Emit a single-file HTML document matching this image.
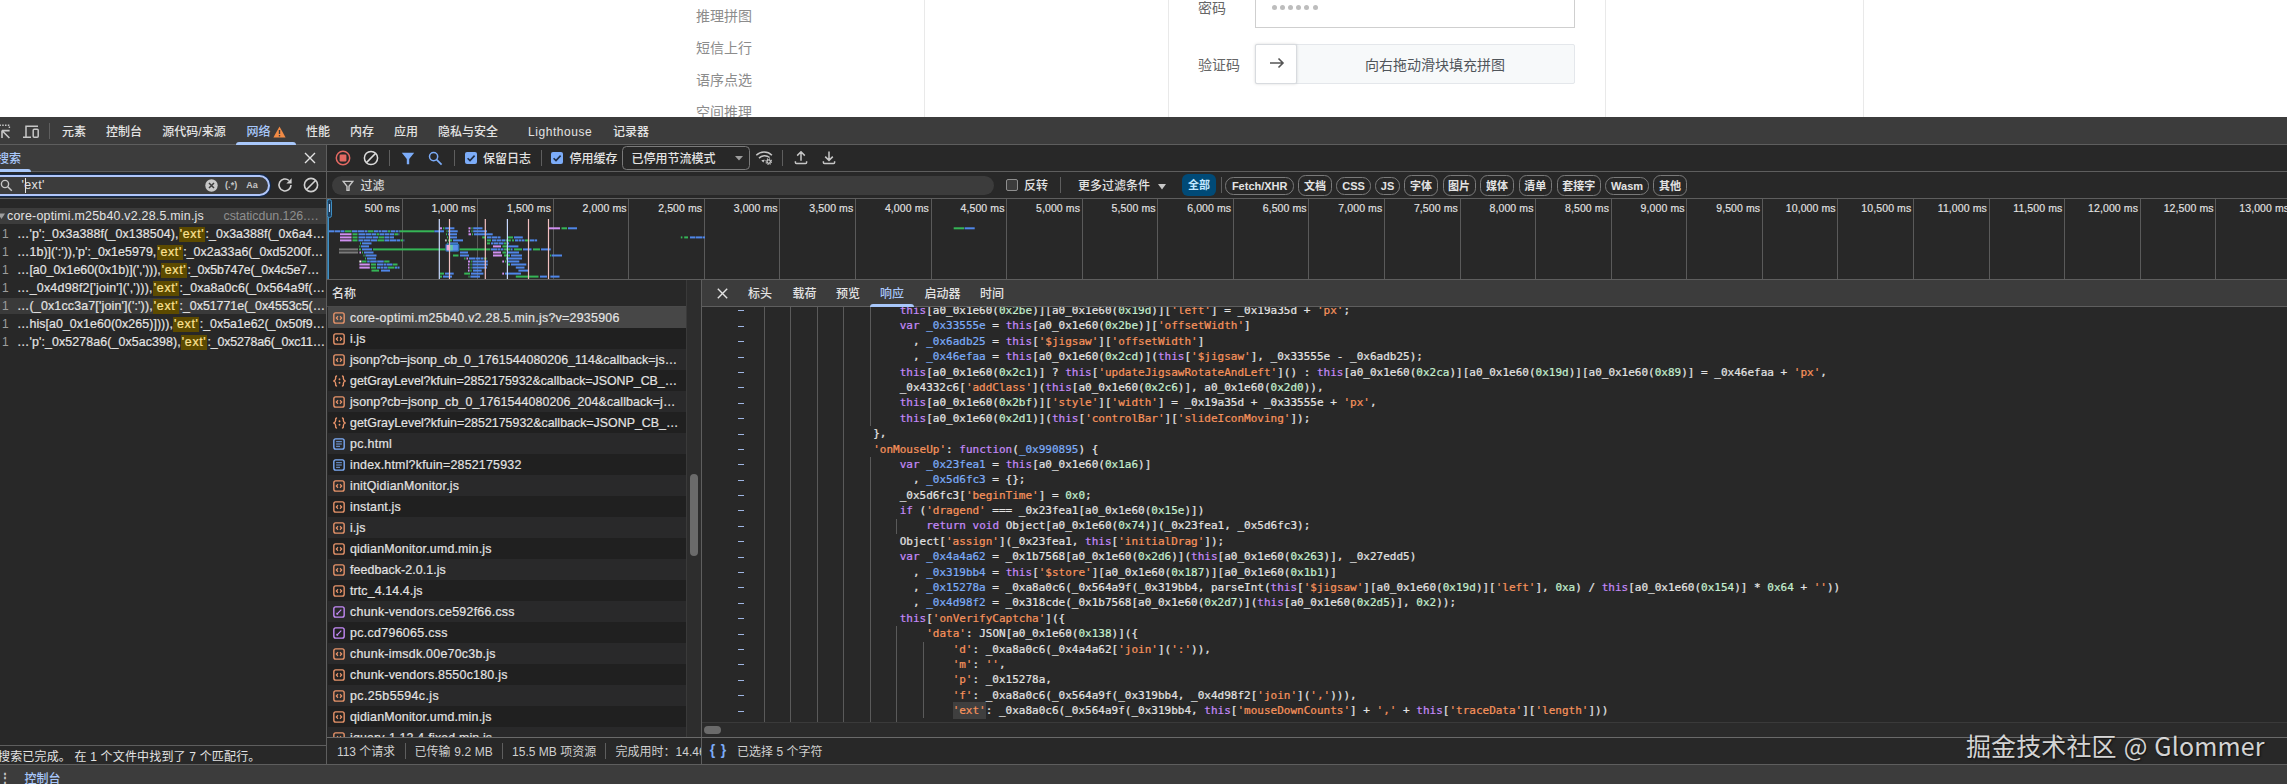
<!DOCTYPE html>
<html lang="zh-CN"><head><meta charset="utf-8"><title>DevTools</title><style>
*{box-sizing:border-box;margin:0;padding:0}
html,body{width:2287px;height:784px;overflow:hidden;background:#fff}
body{position:relative;font-family:"Liberation Sans","Noto Sans CJK SC",sans-serif;font-size:12px;color:#e3e3e3}
.abs{position:absolute}
.t{position:absolute;white-space:nowrap;line-height:16px;height:16px}
.m{font-weight:500}
.ln{position:absolute;background:#5e5e5e}
.pg{position:absolute;color:#8c8c8c;font-size:14px;line-height:20px;white-space:nowrap}
.dt{position:absolute;left:0;top:117px;width:2287px;height:667px;background:#282828}
.pill{position:absolute;border:1px solid #7a7a7a;border-radius:9px;text-align:center;white-space:nowrap;font-weight:bold;font-size:11px;color:#e3e3e3}
.tick{-webkit-text-stroke:.15px;position:absolute;top:201px;letter-spacing:.1px;font-size:10.5px;line-height:14px;text-align:right;white-space:nowrap;color:#e3e3e3;width:80px}
.gl{position:absolute;top:199px;width:1px;height:80px;background:#5a5a5a}
.row{position:absolute;left:328px;width:358px;height:21px}
.row .nm{-webkit-text-stroke:.2px;position:absolute;left:22px;top:3px;line-height:16px;white-space:nowrap;color:#e3e3e3}
.row svg{position:absolute;left:4.6px;top:4.6px}
.sr{position:absolute;left:0;width:326px;height:18px;white-space:nowrap;overflow:hidden}
.sr .n{position:absolute;left:2px;top:1px;color:#9e9e9e;line-height:16px}
.sr .c{-webkit-text-stroke:.2px;position:absolute;top:1px;line-height:16px;white-space:nowrap;color:#e3e3e3;font-size:12.4px}
.hl{background:#5c4a00;color:#fde293;padding:1px 0 1px 0;letter-spacing:1.05px}
.code{position:absolute;left:702px;top:307px;width:1585px;height:416px;overflow:hidden;background:#282828}
.cl{position:absolute;left:65.2px;white-space:pre;font-family:"DejaVu Sans Mono","Liberation Mono",monospace;font-size:11px;line-height:15.35px;height:15.35px;color:#e3e3e3;-webkit-text-stroke:.22px}
.k{color:#c58af9}.s{color:#f8935c}.n{color:#c4eed0}.d{color:#7cacf8}
.dash{position:absolute;left:36px;width:6.4px;height:1.3px;background:#9fb6e4}
.ig{position:absolute;width:1px;background:#5a5a5a}
</style></head><body>
<div class="pg" style="left:696px;top:6px">推理拼图</div>
<div class="pg" style="left:696px;top:38px">短信上行</div>
<div class="pg" style="left:696px;top:70px">语序点选</div>
<div class="pg" style="left:696px;top:102px">空间推理</div>
<div class="abs" style="left:924px;top:0;width:1px;height:117px;background:#e9e9e9"></div>
<div class="abs" style="left:1168px;top:0;width:1px;height:117px;background:#e9e9e9"></div>
<div class="abs" style="left:1605px;top:0;width:1px;height:117px;background:#e9e9e9"></div>
<div class="abs" style="left:1863px;top:0;width:1px;height:117px;background:#e9e9e9"></div>
<div class="pg" style="left:1198px;top:-2px;color:#666">密码</div>
<div class="abs" style="left:1255px;top:-10px;width:320px;height:38px;border:1px solid #cfcfcf;background:#fff"></div>
<div class="abs" style="left:1272.0px;top:5.4px;width:5px;height:5px;border-radius:50%;background:#bdbdbd"></div>
<div class="abs" style="left:1280.1px;top:5.4px;width:5px;height:5px;border-radius:50%;background:#bdbdbd"></div>
<div class="abs" style="left:1288.2px;top:5.4px;width:5px;height:5px;border-radius:50%;background:#bdbdbd"></div>
<div class="abs" style="left:1296.3px;top:5.4px;width:5px;height:5px;border-radius:50%;background:#bdbdbd"></div>
<div class="abs" style="left:1304.4px;top:5.4px;width:5px;height:5px;border-radius:50%;background:#bdbdbd"></div>
<div class="abs" style="left:1312.5px;top:5.4px;width:5px;height:5px;border-radius:50%;background:#bdbdbd"></div>
<div class="pg" style="left:1198px;top:54.5px;color:#666">验证码</div>
<div class="abs" style="left:1255px;top:44px;width:320px;height:40px;border:1px solid #e4e7eb;background:#f7f9fa;border-radius:2px"></div>
<div class="pg" style="left:1365px;top:55px;color:#50555a">向右拖动滑块填充拼图</div>
<div class="abs" style="left:1255px;top:44px;width:42px;height:40px;border:1px solid #d8dbdf;background:#fff;border-radius:2px;box-shadow:0 0 3px rgba(0,0,0,.15)"></div>
<svg class="abs" style="left:1268px;top:56px" width="18" height="14" viewBox="0 0 18 14"><path d="M2 7H15M10.5 2.5L15 7L10.5 11.5" fill="none" stroke="#555" stroke-width="1.6"></path></svg>
<div class="dt"></div>
<div class="abs" style="left:0;top:117px;width:2287px;height:27px;background:#3c3c3c"></div>
<div class="ln" style="left:0;top:144px;width:2287px;height:1px"></div>
<svg class="abs" style="left:-6px;top:123px" width="18" height="18" viewBox="0 0 18 18"><path d="M5.4 2.2H15.4V6" fill="none" stroke="#c7c7c7" stroke-width="1.4" stroke-dasharray="1.5 1.3"></path><path d="M8 7.6H15.6M8 7.6V15M8.4 8L15.4 15" fill="none" stroke="#c7c7c7" stroke-width="1.6"></path></svg>
<svg class="abs" style="left:22px;top:124px" width="18" height="16" viewBox="0 0 18 16"><path d="M4 13V2.2H16M1 13.2H9" fill="none" stroke="#c7c7c7" stroke-width="1.5"></path><rect x="11.2" y="5.2" width="5" height="8" rx="1" fill="none" stroke="#c7c7c7" stroke-width="1.5"></rect></svg>
<div class="ln" style="left:48.9px;top:123px;width:1px;height:16px"></div>
<div class="t m" style="left:62px;top:124px;color:#e3e3e3">元素</div>
<div class="t m" style="left:106px;top:124px;color:#e3e3e3">控制台</div>
<div class="t m" style="left:162.3px;top:124px;color:#e3e3e3">源代码/来源</div>
<div class="t m" style="left:246.5px;top:124px;color:#a8c7fa">网络</div>
<div class="t m" style="left:306px;top:124px;color:#e3e3e3">性能</div>
<div class="t m" style="left:350px;top:124px;color:#e3e3e3">内存</div>
<div class="t m" style="left:394px;top:124px;color:#e3e3e3">应用</div>
<div class="t m" style="left:438px;top:124px;color:#e3e3e3">隐私与安全</div>
<div class="t m" style="left:528px;top:124px;color:#e3e3e3;letter-spacing:.55px">Lighthouse</div>
<div class="t m" style="left:613px;top:124px;color:#e3e3e3">记录器</div>
<svg class="abs" style="left:272.5px;top:125.5px" width="13" height="12" viewBox="0 0 13 12"><path d="M6.5 0.6L12.6 11.4H0.4Z" fill="#f28b45"></path><rect x="5.8" y="4" width="1.4" height="4" fill="#3c3c3c"></rect><rect x="5.8" y="9" width="1.4" height="1.4" fill="#3c3c3c"></rect></svg>
<div class="abs" style="left:236px;top:142px;width:60px;height:3px;background:#a8c7fa;border-radius:3px 3px 0 0"></div>
<div class="abs" style="left:0;top:145px;width:326px;height:26px;background:#3c3c3c"></div>
<div class="ln" style="left:0;top:171px;width:326px;height:1px"></div>
<div class="t m" style="left:-3px;top:151px;color:#a8c7fa">搜索</div>
<div class="abs" style="left:0;top:169px;width:31px;height:3px;background:#a8c7fa;border-radius:0 3px 0 0"></div>
<svg class="abs" style="left:304px;top:152px" width="12" height="12" viewBox="0 0 12 12"><path d="M1 1L11 11M11 1L1 11" stroke="#e3e3e3" stroke-width="1.4" fill="none"></path></svg>
<div class="ln" style="left:326px;top:145px;width:1px;height:619px"></div>
<div class="abs" style="left:-12px;top:175px;width:281.5px;height:20.5px;border:2px solid #b0c6fa;border-radius:10.5px;background:#3c3c3c;box-shadow:0 0 0 1.2px #13294d"></div>
<svg class="abs" style="left:0;top:179px" width="13" height="13" viewBox="0 0 13 13"><circle cx="5" cy="5" r="3.6" fill="none" stroke="#c7c7c7" stroke-width="1.4"></circle><path d="M7.8 7.8L11.8 11.8" stroke="#c7c7c7" stroke-width="1.5"></path></svg>
<div class="t" style="left: 21.5px; top: 177px; font-size: 12.5px; letter-spacing: 0.369px;">'ext'</div>
<div class="abs" style="left:24.5px;top:178px;width:1px;height:15px;background:#e3e3e3"></div>
<svg class="abs" style="left:205.2px;top:178.6px" width="13" height="13" viewBox="0 0 13 13"><circle cx="6.5" cy="6.5" r="6.2" fill="#c7c7c7"></circle><path d="M4 4L9 9M9 4L4 9" stroke="#3c3c3c" stroke-width="1.5"></path></svg>
<div class="t" style="left:225px;top:176.6px;font-size:9px;color:#c7c7c7;font-weight:bold;letter-spacing:.1px">(.*)</div>
<div class="t" style="left:246.3px;top:177px;font-size:9px;color:#c7c7c7;font-weight:bold">Aa</div>
<svg class="abs" style="left:277px;top:177px" width="16" height="16" viewBox="0 0 16 16"><path d="M14 8A6 6 0 1 1 12 3.5" fill="none" stroke="#d0d0d0" stroke-width="1.6"></path><path d="M14.6 1.2V6.4H9.4Z" fill="#d0d0d0"></path></svg>
<svg class="abs" style="left:303.1px;top:177px" width="16" height="16" viewBox="0 0 16 16"><circle cx="8" cy="8" r="6.6" fill="none" stroke="#d0d0d0" stroke-width="1.6"></circle><path d="M3.5 12.5L12.5 3.5" stroke="#d0d0d0" stroke-width="1.6"></path></svg>
<div class="ln" style="left:0;top:198px;width:326px;height:1px"></div>
<div class="abs" style="left:0;top:208px;width:326px;height:16px;background:#3c3c3c"></div>
<svg class="abs" style="left:-2px;top:212.5px" width="8" height="7" viewBox="0 0 8 7"><path d="M0 0.5H7L3.5 6Z" fill="#9e9e9e"></path></svg>
<div class="t" style="left: 7px; top: 208px; font-size: 12.4px; letter-spacing: 0.231px;">core-optimi.m25b40.v2.28.5.min.js</div>
<div class="t" style="left: 223.5px; top: 208px; font-size: 12.4px; color: rgb(143, 143, 143); letter-spacing: -0.016px;">cstaticdun.126.…</div>
<div class="abs" style="left:0;top:298px;width:326px;height:16px;background:#3a3a3a"></div>
<div class="sr" style="top:225px"><span class="n">1</span><span class="c" style="left: 17px; letter-spacing: 0.128px;">…'p':_0x3a388f(_0x138504),</span><span class="abs" style="left:178.9px;top:1.5px;width:26.2px;height:15px;background:#5c4a00"></span><span class="c" style="left: 179.7px; color: rgb(253, 226, 147); letter-spacing: 0.667px;">'ext'</span><span class="c" style="left: 205.5px; letter-spacing: 0.056px;">:_0x3a388f(_0x6a4…</span></div>
<div class="sr" style="top:243px"><span class="n">1</span><span class="c" style="left: 17px; letter-spacing: 0.07px;">…1b)](':')),'p':_0x1e5979,</span><span class="abs" style="left:156.6px;top:1.5px;width:26.2px;height:15px;background:#5c4a00"></span><span class="c" style="left: 157.4px; color: rgb(253, 226, 147); letter-spacing: 0.667px;">'ext'</span><span class="c" style="left: 183.2px; letter-spacing: 0.039px;">:_0x2a33a6(_0xd5200f…</span></div>
<div class="sr" style="top:261px"><span class="n">1</span><span class="c" style="left: 17px; letter-spacing: -0.006px;">…[a0_0x1e60(0x1b)](','))),</span><span class="abs" style="left:160.9px;top:1.5px;width:26.2px;height:15px;background:#5c4a00"></span><span class="c" style="left: 161.7px; color: rgb(253, 226, 147); letter-spacing: 0.667px;">'ext'</span><span class="c" style="left: 187.5px; letter-spacing: -0.167px;">:_0x5b747e(_0x4c5e7…</span></div>
<div class="sr" style="top:279px"><span class="n">1</span><span class="c" style="left: 17px; letter-spacing: 0.25px;">…_0x4d98f2['join'](','))),</span><span class="abs" style="left:153px;top:1.5px;width:26.2px;height:15px;background:#5c4a00"></span><span class="c" style="left: 153.8px; color: rgb(253, 226, 147); letter-spacing: 0.667px;">'ext'</span><span class="c" style="left: 179.6px; letter-spacing: 0.128px;">:_0xa8a0c6(_0x564a9f(…</span></div>
<div class="sr" style="top:297px"><span class="n">1</span><span class="c" style="left: 17px; letter-spacing: 0.171px;">…(_0x1cc3a7['join'](':')),</span><span class="abs" style="left:153px;top:1.5px;width:26.2px;height:15px;background:#5c4a00"></span><span class="c" style="left: 153.8px; color: rgb(253, 226, 147); letter-spacing: 0.667px;">'ext'</span><span class="c" style="left: 179.6px; letter-spacing: -0.029px;">:_0x51771e(_0x4553c5(…</span></div>
<div class="sr" style="top:315px"><span class="n">1</span><span class="c" style="left: 17px; letter-spacing: 0.066px;">…his[a0_0x1e60(0x265)]))),</span><span class="abs" style="left:173.2px;top:1.5px;width:26.2px;height:15px;background:#5c4a00"></span><span class="c" style="left: 174px; color: rgb(253, 226, 147); letter-spacing: 0.667px;">'ext'</span><span class="c" style="left: 199.8px; letter-spacing: -0.01px;">:_0x5a1e62(_0x50f9…</span></div>
<div class="sr" style="top:333px"><span class="n">1</span><span class="c" style="left: 17px; letter-spacing: 0.103px;">…'p':_0x5278a6(_0x5ac398),</span><span class="abs" style="left:181px;top:1.5px;width:26.2px;height:15px;background:#5c4a00"></span><span class="c" style="left: 181.8px; color: rgb(253, 226, 147); letter-spacing: 0.667px;">'ext'</span><span class="c" style="left: 207.6px; letter-spacing: -0.163px;">:_0x5278a6(_0xc11…</span></div>
<div class="ln" style="left:0;top:745px;width:326px;height:1px"></div>
<div class="t" style="left: -2px; top: 749.2px; letter-spacing: 0.172px;">搜索已完成。 在 1 个文件中找到了 7 个匹配行。</div>
<div class="ln" style="left:327px;top:171px;width:1960px;height:1px"></div>
<svg class="abs" style="left:335px;top:150px" width="16" height="16" viewBox="0 0 16 16"><circle cx="8" cy="8" r="6.7" fill="none" stroke="#e46962" stroke-width="1.5"></circle><rect x="4.6" y="4.6" width="6.8" height="6.8" rx="1.2" fill="#e46962"></rect></svg>
<svg class="abs" style="left:363px;top:150px" width="16" height="16" viewBox="0 0 16 16"><circle cx="8" cy="8" r="6.6" fill="none" stroke="#dcdcdc" stroke-width="1.5"></circle><path d="M3.4 12.6L12.6 3.4" stroke="#dcdcdc" stroke-width="1.5"></path></svg>
<div class="ln" style="left:388.6px;top:150px;width:1px;height:16px"></div>
<svg class="abs" style="left:401px;top:151.5px" width="14" height="13" viewBox="0 0 14 13"><path d="M0.8 0.8H13.2L8.2 7V12.2H5.8V7Z" fill="#7cacf8"></path></svg>
<svg class="abs" style="left:428px;top:151px" width="15" height="15" viewBox="0 0 15 15"><circle cx="5.6" cy="5.6" r="4.1" fill="none" stroke="#7cacf8" stroke-width="1.5"></circle><path d="M8.6 8.6L13.6 13.6" stroke="#7cacf8" stroke-width="1.6"></path></svg>
<div class="ln" style="left:453.6px;top:150px;width:1px;height:16px"></div>
<svg class="abs" style="left:465px;top:152px" width="12" height="12" viewBox="0 0 12 12"><rect width="12" height="12" rx="2" fill="#7cacf8"></rect><path d="M2.6 6.2L5 8.6L9.6 3.6" fill="none" stroke="#1f2d44" stroke-width="1.6"></path></svg>
<div class="t m" style="left:483px;top:150.5px">保留日志</div>
<div class="ln" style="left:540.5px;top:150px;width:1px;height:16px"></div>
<svg class="abs" style="left:551px;top:152px" width="12" height="12" viewBox="0 0 12 12"><rect width="12" height="12" rx="2" fill="#7cacf8"></rect><path d="M2.6 6.2L5 8.6L9.6 3.6" fill="none" stroke="#1f2d44" stroke-width="1.6"></path></svg>
<div class="t m" style="left:569.4px;top:150.5px">停用缓存</div>
<div class="abs" style="left:622px;top:146px;width:128px;height:24px;border:1px solid #7a7a7a;border-radius:4.5px"></div>
<div class="t m" style="left:631.5px;top:151px">已停用节流模式</div>
<svg class="abs" style="left:735px;top:155.5px" width="8" height="5" viewBox="0 0 8 5"><path d="M0 0H8L4 4.6Z" fill="#9e9e9e"></path></svg>
<svg class="abs" style="left:755px;top:150px" width="18" height="16" viewBox="0 0 18 16"><path d="M1.3 5.3A11 11 0 0 1 16.9 5.3M4 8.1A8 8 0 0 1 14.6 7.5" fill="none" stroke="#c7c7c7" stroke-width="1.5"></path><path d="M6.3 10.6A4.4 4.4 0 0 1 9.8 9.7L8.4 12.4Z" fill="#c7c7c7"></path><circle cx="13.7" cy="11.6" r="2.7" fill="none" stroke="#c7c7c7" stroke-width="1.4" stroke-dasharray="1.06 1.06"></circle><circle cx="13.7" cy="11.6" r="1.7" fill="none" stroke="#c7c7c7" stroke-width="1.3"></circle></svg>
<div class="ln" style="left:782px;top:150px;width:1px;height:16px"></div>
<svg class="abs" style="left:794px;top:151px" width="14" height="14" viewBox="0 0 14 14"><path d="M7 9.8V1M3.2 4.6L7 0.8L10.8 4.6M1.4 10.2V11.4Q1.4 12.4 2.4 12.4H11.6Q12.6 12.4 12.6 11.4V10.2" fill="none" stroke="#c7c7c7" stroke-width="1.5"></path></svg>
<svg class="abs" style="left:822px;top:151px" width="14" height="14" viewBox="0 0 14 14"><path d="M7 0.4V9.2M3.2 5.6L7 9.4L10.8 5.6M1.4 10.2V11.4Q1.4 12.4 2.4 12.4H11.6Q12.6 12.4 12.6 11.4V10.2" fill="none" stroke="#c7c7c7" stroke-width="1.5"></path></svg>
<div class="abs" style="left:332px;top:175.5px;width:662px;height:19.5px;border-radius:10px;background:#3c3c3c"></div>
<svg class="abs" style="left:342px;top:180px" width="12" height="12" viewBox="0 0 12 12"><path d="M1.2 1.4H10.8L7 6.2V10.4H5V6.2Z" fill="none" stroke="#c7c7c7" stroke-width="1.4"></path></svg>
<div class="t m" style="left:360.4px;top:178.4px;color:#dadada">过滤</div>
<div class="abs" style="left:1006px;top:179px;width:12px;height:12px;border:1px solid #8e8e8e;border-radius:2px;background:#3c3c3c"></div>
<div class="t m" style="left:1024px;top:178.3px">反转</div>
<div class="ln" style="left:1059.5px;top:177px;width:1px;height:16px"></div>
<div class="t m" style="left:1078px;top:178.3px">更多过滤条件</div>
<svg class="abs" style="left:1157.5px;top:183.5px" width="8" height="6" viewBox="0 0 8 6"><path d="M0 0H8L4 5.4Z" fill="#c7c7c7"></path></svg>
<div class="abs m" style="left:1182px;top:174px;width:34px;height:21.5px;border-radius:6px;background:#004a77;color:#c2e7ff;text-align:center;line-height:23.6px;font-weight:bold;font-size:11px">全部</div>
<div class="ln" style="left:1220.5px;top:177px;width:1px;height:16px"></div>
<div class="pill" style="left:1225.4px;top:176.6px;width:68.6px;height:18.4px;line-height:17.2px;border-radius:8.5px">Fetch/XHR</div>
<div class="pill" style="left:1298.3px;top:174.8px;width:33.4px;height:21px;line-height:20.4px;border-radius:7.5px">文档</div>
<div class="pill" style="left:1336.4px;top:176.6px;width:34.3px;height:18.4px;line-height:17.2px;border-radius:8.5px">CSS</div>
<div class="pill" style="left:1375.4px;top:176.6px;width:24.4px;height:18.4px;line-height:17.2px;border-radius:8.5px">JS</div>
<div class="pill" style="left:1404.3px;top:174.8px;width:33.3px;height:21px;line-height:20.4px;border-radius:7.5px">字体</div>
<div class="pill" style="left:1442.5px;top:174.8px;width:33.2px;height:21px;line-height:20.4px;border-radius:7.5px">图片</div>
<div class="pill" style="left:1480.4px;top:174.8px;width:33.4px;height:21px;line-height:20.4px;border-radius:7.5px">媒体</div>
<div class="pill" style="left:1518.5px;top:174.8px;width:33.3px;height:21px;line-height:20.4px;border-radius:7.5px">清单</div>
<div class="pill" style="left:1556.5px;top:174.8px;width:44.5px;height:21px;line-height:20.4px;border-radius:7.5px">套接字</div>
<div class="pill" style="left:1605.3px;top:176.6px;width:43.5px;height:18.4px;line-height:17.2px;border-radius:8.5px">Wasm</div>
<div class="pill" style="left:1653.1px;top:174.8px;width:33.7px;height:21px;line-height:20.4px;border-radius:7.5px">其他</div>
<div class="ln" style="left:327px;top:198px;width:1960px;height:1px"></div>
<div class="gl" style="left:401.5px"></div>
<div class="tick" style="left:319.9px">500 ms</div>
<div class="gl" style="left:477.1px"></div>
<div class="tick" style="left:395.5px">1,000 ms</div>
<div class="gl" style="left:552.6px"></div>
<div class="tick" style="left:471.0px">1,500 ms</div>
<div class="gl" style="left:628.2px"></div>
<div class="tick" style="left:546.6px">2,000 ms</div>
<div class="gl" style="left:703.8px"></div>
<div class="tick" style="left:622.2px">2,500 ms</div>
<div class="gl" style="left:779.3px"></div>
<div class="tick" style="left:697.7px">3,000 ms</div>
<div class="gl" style="left:854.9px"></div>
<div class="tick" style="left:773.3px">3,500 ms</div>
<div class="gl" style="left:930.5px"></div>
<div class="tick" style="left:848.9px">4,000 ms</div>
<div class="gl" style="left:1006.1px"></div>
<div class="tick" style="left:924.5px">4,500 ms</div>
<div class="gl" style="left:1081.6px"></div>
<div class="tick" style="left:1000.0px">5,000 ms</div>
<div class="gl" style="left:1157.2px"></div>
<div class="tick" style="left:1075.6px">5,500 ms</div>
<div class="gl" style="left:1232.8px"></div>
<div class="tick" style="left:1151.2px">6,000 ms</div>
<div class="gl" style="left:1308.3px"></div>
<div class="tick" style="left:1226.7px">6,500 ms</div>
<div class="gl" style="left:1383.9px"></div>
<div class="tick" style="left:1302.3px">7,000 ms</div>
<div class="gl" style="left:1459.5px"></div>
<div class="tick" style="left:1377.9px">7,500 ms</div>
<div class="gl" style="left:1535.0px"></div>
<div class="tick" style="left:1453.5px">8,000 ms</div>
<div class="gl" style="left:1610.6px"></div>
<div class="tick" style="left:1529.0px">8,500 ms</div>
<div class="gl" style="left:1686.2px"></div>
<div class="tick" style="left:1604.6px">9,000 ms</div>
<div class="gl" style="left:1761.8px"></div>
<div class="tick" style="left:1680.2px">9,500 ms</div>
<div class="gl" style="left:1837.3px"></div>
<div class="tick" style="left:1755.7px">10,000 ms</div>
<div class="gl" style="left:1912.9px"></div>
<div class="tick" style="left:1831.3px">10,500 ms</div>
<div class="gl" style="left:1988.5px"></div>
<div class="tick" style="left:1906.9px">11,000 ms</div>
<div class="gl" style="left:2064.0px"></div>
<div class="tick" style="left:1982.4px">11,500 ms</div>
<div class="gl" style="left:2139.6px"></div>
<div class="tick" style="left:2058.0px">12,000 ms</div>
<div class="gl" style="left:2215.2px"></div>
<div class="tick" style="left:2133.6px">12,500 ms</div>
<div class="gl" style="left:2290.8px"></div>
<div class="tick" style="left:2209.2px">13,000 ms</div>
<div class="ln" style="left:327px;top:279px;width:1960px;height:1px"></div>
<svg class="abs" style="left:326px;top:199px" width="700" height="80" viewBox="0 0 700 80"><rect x="3.0" y="31.3" width="5.5" height="2.0" fill="#4f86e8"></rect><rect x="9.0" y="31.3" width="5.5" height="2.0" fill="#4f86e8"></rect><rect x="15.0" y="31.3" width="3.5" height="2.0" fill="#4f86e8"></rect><rect x="19.0" y="31.3" width="6.5" height="2.0" fill="#35b556"></rect><rect x="26.0" y="31.3" width="5.5" height="2.0" fill="#4f86e8"></rect><rect x="32.0" y="31.3" width="6.5" height="2.0" fill="#4f86e8"></rect><rect x="39.0" y="31.3" width="2.5" height="2.0" fill="#4f86e8"></rect><rect x="42.0" y="31.3" width="5.5" height="2.0" fill="#35b556"></rect><rect x="48.0" y="31.3" width="4.5" height="2.0" fill="#4f86e8"></rect><rect x="53.0" y="31.3" width="2.5" height="2.0" fill="#4f86e8"></rect><rect x="56.0" y="31.3" width="5.5" height="2.0" fill="#4f86e8"></rect><rect x="62.0" y="31.3" width="2.5" height="2.0" fill="#35b556"></rect><rect x="65.0" y="31.3" width="4.5" height="2.0" fill="#4f86e8"></rect><rect x="70.0" y="31.3" width="2.5" height="2.0" fill="#4f86e8"></rect><rect x="73.0" y="31.3" width="0.8" height="2.0" fill="#4f86e8"></rect><rect x="73.7" y="31.3" width="34.7" height="2.0" fill="#35b556"></rect><rect x="108.4" y="31.3" width="9.6" height="2.0" fill="#4f86e8"></rect><rect x="14.0" y="34.3" width="11.5" height="2.0" fill="#cf8ff0"></rect><rect x="26.5" y="34.3" width="5.0" height="2.0" fill="#35b556"></rect><rect x="32.5" y="34.3" width="6.5" height="2.0" fill="#4f86e8"></rect><rect x="39.5" y="34.3" width="5.5" height="2.0" fill="#4f86e8"></rect><rect x="45.5" y="34.3" width="4.5" height="2.0" fill="#4f86e8"></rect><rect x="50.5" y="34.3" width="2.5" height="2.0" fill="#35b556"></rect><rect x="53.5" y="34.3" width="4.5" height="2.0" fill="#4f86e8"></rect><rect x="58.5" y="34.3" width="4.5" height="2.0" fill="#4f86e8"></rect><rect x="63.5" y="34.3" width="4.5" height="2.0" fill="#4f86e8"></rect><rect x="68.5" y="34.3" width="3.5" height="2.0" fill="#35b556"></rect><rect x="72.5" y="34.3" width="0.8" height="2.0" fill="#4f86e8"></rect><rect x="14.0" y="37.4" width="11.5" height="2.0" fill="#cf8ff0"></rect><rect x="26.5" y="37.4" width="5.0" height="2.0" fill="#35b556"></rect><rect x="32.5" y="37.4" width="6.5" height="2.0" fill="#4f86e8"></rect><rect x="39.5" y="37.4" width="6.5" height="2.0" fill="#4f86e8"></rect><rect x="46.5" y="37.4" width="5.5" height="2.0" fill="#4f86e8"></rect><rect x="52.5" y="37.4" width="5.5" height="2.0" fill="#35b556"></rect><rect x="58.5" y="37.4" width="4.5" height="2.0" fill="#4f86e8"></rect><rect x="63.5" y="37.4" width="4.5" height="2.0" fill="#4f86e8"></rect><rect x="14.0" y="40.4" width="11.5" height="2.0" fill="#cf8ff0"></rect><rect x="26.5" y="40.4" width="5.0" height="2.0" fill="#35b556"></rect><rect x="32.5" y="40.4" width="4.5" height="2.0" fill="#4f86e8"></rect><rect x="37.5" y="40.4" width="6.5" height="2.0" fill="#4f86e8"></rect><rect x="44.5" y="40.4" width="6.5" height="2.0" fill="#4f86e8"></rect><rect x="51.5" y="40.4" width="6.5" height="2.0" fill="#35b556"></rect><rect x="58.5" y="40.4" width="4.5" height="2.0" fill="#4f86e8"></rect><rect x="63.5" y="40.4" width="6.5" height="2.0" fill="#4f86e8"></rect><rect x="70.5" y="40.4" width="3.5" height="2.0" fill="#4f86e8"></rect><rect x="74.5" y="40.4" width="2.5" height="2.0" fill="#35b556"></rect><rect x="77.5" y="40.4" width="0.8" height="2.0" fill="#4f86e8"></rect><rect x="34.0" y="43.4" width="1.0" height="2.0" fill="#35b556"></rect><rect x="36.0" y="43.4" width="9.5" height="2.0" fill="#4f86e8"></rect><rect x="33.3" y="46.4" width="1.0" height="2.0" fill="#35b556"></rect><rect x="35.0" y="46.4" width="8.0" height="2.0" fill="#4f86e8"></rect><rect x="13.0" y="49.4" width="19.0" height="2.0" fill="#7a7a7a"></rect><rect x="33.0" y="49.4" width="2.0" height="2.0" fill="#35b556"></rect><rect x="36.0" y="49.4" width="10.0" height="2.0" fill="#4f86e8"></rect><rect x="47.0" y="49.4" width="72.7" height="2.0" fill="#35b556"></rect><rect x="133.5" y="49.4" width="30.9" height="2.0" fill="#35b556"></rect><rect x="13.0" y="52.5" width="19.0" height="2.0" fill="#7a7a7a"></rect><rect x="33.5" y="52.5" width="1.5" height="2.0" fill="#cf8ff0"></rect><rect x="36.0" y="52.5" width="1.0" height="2.0" fill="#35b556"></rect><rect x="38.0" y="52.5" width="9.5" height="2.0" fill="#4f86e8"></rect><rect x="37.5" y="55.5" width="1.0" height="2.0" fill="#35b556"></rect><rect x="39.5" y="55.5" width="11.0" height="2.0" fill="#4f86e8"></rect><rect x="39.0" y="58.5" width="1.0" height="2.0" fill="#35b556"></rect><rect x="41.0" y="58.5" width="9.0" height="2.0" fill="#4f86e8"></rect><rect x="33.4" y="61.5" width="2.0" height="2.0" fill="#ffffff"></rect><rect x="36.0" y="61.5" width="4.5" height="2.0" fill="#35b556"></rect><rect x="41.2" y="61.5" width="2.5" height="2.0" fill="#4f86e8"></rect><rect x="44.2" y="61.5" width="6.5" height="2.0" fill="#4f86e8"></rect><rect x="51.2" y="61.5" width="6.5" height="2.0" fill="#4f86e8"></rect><rect x="58.2" y="61.5" width="5.3" height="2.0" fill="#35b556"></rect><rect x="33.4" y="64.5" width="10.4" height="2.0" fill="#cf8ff0"></rect><rect x="45.0" y="64.5" width="5.0" height="2.0" fill="#35b556"></rect><rect x="51.0" y="64.5" width="6.5" height="2.0" fill="#4f86e8"></rect><rect x="58.0" y="64.5" width="2.5" height="2.0" fill="#4f86e8"></rect><rect x="61.0" y="64.5" width="5.5" height="2.0" fill="#4f86e8"></rect><rect x="67.0" y="64.5" width="4.5" height="2.0" fill="#35b556"></rect><rect x="33.4" y="67.6" width="10.4" height="2.0" fill="#cf8ff0"></rect><rect x="45.0" y="67.6" width="5.0" height="2.0" fill="#35b556"></rect><rect x="51.0" y="67.6" width="3.5" height="2.0" fill="#4f86e8"></rect><rect x="55.0" y="67.6" width="2.5" height="2.0" fill="#4f86e8"></rect><rect x="58.0" y="67.6" width="3.5" height="2.0" fill="#4f86e8"></rect><rect x="62.0" y="67.6" width="6.5" height="2.0" fill="#35b556"></rect><rect x="69.0" y="67.6" width="2.5" height="2.0" fill="#4f86e8"></rect><rect x="72.0" y="67.6" width="1.5" height="2.0" fill="#4f86e8"></rect><rect x="45.5" y="70.6" width="7.5" height="2.0" fill="#35b556"></rect><rect x="55.0" y="70.6" width="9.0" height="2.0" fill="#4f86e8"></rect><rect x="113.6" y="28.3" width="2.4" height="2.0" fill="#cf8ff0"></rect><rect x="117.0" y="28.3" width="1.4" height="2.0" fill="#35b556"></rect><rect x="119.2" y="28.3" width="9.2" height="2.0" fill="#4f86e8"></rect><rect x="120.5" y="31.3" width="1.0" height="2.0" fill="#35b556"></rect><rect x="122.0" y="31.3" width="9.7" height="2.0" fill="#4f86e8"></rect><rect x="120.0" y="34.3" width="1.0" height="2.0" fill="#35b556"></rect><rect x="122.0" y="34.3" width="9.0" height="2.0" fill="#4f86e8"></rect><rect x="121.0" y="37.4" width="1.0" height="2.0" fill="#35b556"></rect><rect x="123.0" y="37.4" width="8.0" height="2.0" fill="#4f86e8"></rect><rect x="119.3" y="40.4" width="1.2" height="2.0" fill="#ffffff"></rect><rect x="122.0" y="40.4" width="4.0" height="2.0" fill="#35b556"></rect><rect x="127.0" y="40.4" width="10.0" height="2.0" fill="#4f86e8"></rect><rect x="121.0" y="43.4" width="1.0" height="2.0" fill="#35b556"></rect><rect x="123.0" y="43.4" width="9.0" height="2.0" fill="#4f86e8"></rect><rect x="134.0" y="52.5" width="8.0" height="2.0" fill="#4f86e8"></rect><rect x="127.0" y="55.5" width="5.5" height="2.0" fill="#35b556"></rect><rect x="134.0" y="55.5" width="9.0" height="2.0" fill="#4f86e8"></rect><rect x="113.7" y="73.6" width="4.3" height="2.0" fill="#35b556"></rect><rect x="119.0" y="73.6" width="8.7" height="2.0" fill="#4f86e8"></rect><rect x="114.0" y="76.6" width="2.0" height="2.0" fill="#35b556"></rect><rect x="117.0" y="76.6" width="9.0" height="2.0" fill="#4f86e8"></rect><rect x="120" y="45.3" width="12.6" height="6.8" rx="1" fill="#5b8fe8" stroke="#2f6fb0" stroke-width="1.4"></rect><rect x="120.6" y="46" width="3.6" height="5.4" fill="#e7a6dc"></rect><rect x="124.2" y="46" width="2.6" height="5.4" fill="#63c7a0"></rect><rect x="142.5" y="28.3" width="2.0" height="2.0" fill="#cf8ff0"></rect><rect x="145.5" y="28.3" width="1.0" height="2.0" fill="#35b556"></rect><rect x="147.2" y="28.3" width="9.3" height="2.0" fill="#4f86e8"></rect><rect x="223.0" y="28.3" width="11.0" height="2.0" fill="#cf8ff0"></rect><rect x="235.5" y="28.3" width="5.5" height="2.0" fill="#35b556"></rect><rect x="242.0" y="28.3" width="9.0" height="2.0" fill="#4f86e8"></rect><rect x="142.5" y="31.3" width="1.5" height="2.0" fill="#cf8ff0"></rect><rect x="145.5" y="31.3" width="1.0" height="2.0" fill="#35b556"></rect><rect x="147.2" y="31.3" width="13.8" height="2.0" fill="#4f86e8"></rect><rect x="142.5" y="34.3" width="2.5" height="2.0" fill="#cf8ff0"></rect><rect x="146.0" y="34.3" width="1.0" height="2.0" fill="#35b556"></rect><rect x="148.0" y="34.3" width="18.7" height="2.0" fill="#4f86e8"></rect><rect x="156.2" y="37.4" width="3.8" height="2.0" fill="#35b556"></rect><rect x="161.0" y="37.4" width="4.5" height="2.0" fill="#4f86e8"></rect><rect x="166.0" y="37.4" width="5.5" height="2.0" fill="#4f86e8"></rect><rect x="172.0" y="37.4" width="2.5" height="2.0" fill="#4f86e8"></rect><rect x="182.0" y="37.4" width="5.0" height="2.0" fill="#35b556"></rect><rect x="188.0" y="37.4" width="8.8" height="2.0" fill="#4f86e8"></rect><rect x="354.8" y="37.4" width="1.6" height="2.0" fill="#35b556"></rect><rect x="358.2" y="37.4" width="3.8" height="2.0" fill="#35b556"></rect><rect x="364.0" y="37.4" width="5.5" height="2.0" fill="#4f86e8"></rect><rect x="370.0" y="37.4" width="6.5" height="2.0" fill="#4f86e8"></rect><rect x="377.0" y="37.4" width="2.0" height="2.0" fill="#4f86e8"></rect><rect x="161.0" y="40.4" width="4.0" height="2.0" fill="#35b556"></rect><rect x="166.0" y="40.4" width="4.5" height="2.0" fill="#4f86e8"></rect><rect x="171.0" y="40.4" width="4.5" height="2.0" fill="#4f86e8"></rect><rect x="176.0" y="40.4" width="3.5" height="2.0" fill="#4f86e8"></rect><rect x="180.0" y="40.4" width="4.9" height="2.0" fill="#35b556"></rect><rect x="186.0" y="40.4" width="2.0" height="2.0" fill="#35b556"></rect><rect x="189.0" y="40.4" width="3.5" height="2.0" fill="#4f86e8"></rect><rect x="193.0" y="40.4" width="2.5" height="2.0" fill="#4f86e8"></rect><rect x="196.0" y="40.4" width="2.5" height="2.0" fill="#4f86e8"></rect><rect x="199.0" y="40.4" width="4.5" height="2.0" fill="#35b556"></rect><rect x="204.0" y="40.4" width="4.5" height="2.0" fill="#4f86e8"></rect><rect x="209.0" y="40.4" width="2.1" height="2.0" fill="#4f86e8"></rect><rect x="161.0" y="43.4" width="3.0" height="2.0" fill="#35b556"></rect><rect x="165.0" y="43.4" width="2.5" height="2.0" fill="#4f86e8"></rect><rect x="168.0" y="43.4" width="4.5" height="2.0" fill="#4f86e8"></rect><rect x="173.0" y="43.4" width="4.5" height="2.0" fill="#4f86e8"></rect><rect x="178.0" y="43.4" width="2.5" height="2.0" fill="#35b556"></rect><rect x="181.0" y="43.4" width="2.1" height="2.0" fill="#4f86e8"></rect><rect x="167.0" y="46.4" width="8.0" height="2.0" fill="#cf8ff0"></rect><rect x="176.5" y="46.4" width="4.5" height="2.0" fill="#35b556"></rect><rect x="182.0" y="46.4" width="10.4" height="2.0" fill="#4f86e8"></rect><rect x="165.0" y="49.4" width="6.5" height="2.0" fill="#4f86e8"></rect><rect x="172.0" y="49.4" width="2.5" height="2.0" fill="#4f86e8"></rect><rect x="175.0" y="49.4" width="2.5" height="2.0" fill="#4f86e8"></rect><rect x="178.0" y="49.4" width="6.5" height="2.0" fill="#35b556"></rect><rect x="185.0" y="49.4" width="1.5" height="2.0" fill="#4f86e8"></rect><rect x="188.0" y="49.4" width="8.0" height="2.0" fill="#35b556"></rect><rect x="197.0" y="49.4" width="8.5" height="2.0" fill="#4f86e8"></rect><rect x="207.0" y="49.4" width="7.0" height="2.0" fill="#35b556"></rect><rect x="215.0" y="49.4" width="9.7" height="2.0" fill="#4f86e8"></rect><rect x="167.0" y="52.5" width="8.0" height="2.0" fill="#cf8ff0"></rect><rect x="176.5" y="52.5" width="3.5" height="2.0" fill="#35b556"></rect><rect x="181.0" y="52.5" width="12.0" height="2.0" fill="#4f86e8"></rect><rect x="167.0" y="55.5" width="9.0" height="2.0" fill="#cf8ff0"></rect><rect x="178.0" y="55.5" width="6.0" height="2.0" fill="#35b556"></rect><rect x="185.0" y="55.5" width="11.0" height="2.0" fill="#4f86e8"></rect><rect x="224.0" y="55.5" width="1.0" height="2.0" fill="#35b556"></rect><rect x="225.6" y="55.5" width="10.4" height="2.0" fill="#4f86e8"></rect><rect x="138.2" y="58.5" width="1.2" height="2.0" fill="#35b556"></rect><rect x="140.5" y="58.5" width="1.5" height="2.0" fill="#cf8ff0"></rect><rect x="143.0" y="58.5" width="6.5" height="2.0" fill="#4f86e8"></rect><rect x="150.0" y="58.5" width="4.5" height="2.0" fill="#4f86e8"></rect><rect x="155.0" y="58.5" width="2.5" height="2.0" fill="#4f86e8"></rect><rect x="158.0" y="58.5" width="2.5" height="2.0" fill="#35b556"></rect><rect x="180.0" y="58.5" width="1.0" height="2.0" fill="#35b556"></rect><rect x="182.0" y="58.5" width="14.0" height="2.0" fill="#4f86e8"></rect><rect x="142.0" y="61.5" width="2.0" height="2.0" fill="#cf8ff0"></rect><rect x="144.8" y="61.5" width="1.0" height="2.0" fill="#35b556"></rect><rect x="146.5" y="61.5" width="15.3" height="2.0" fill="#4f86e8"></rect><rect x="176.3" y="61.5" width="1.7" height="2.0" fill="#cf8ff0"></rect><rect x="179.0" y="61.5" width="1.0" height="2.0" fill="#35b556"></rect><rect x="181.0" y="61.5" width="12.3" height="2.0" fill="#4f86e8"></rect><rect x="142.0" y="64.5" width="1.5" height="2.0" fill="#cf8ff0"></rect><rect x="144.6" y="64.5" width="1.0" height="2.0" fill="#35b556"></rect><rect x="146.4" y="64.5" width="15.4" height="2.0" fill="#4f86e8"></rect><rect x="182.0" y="64.5" width="2.0" height="2.0" fill="#35b556"></rect><rect x="185.0" y="64.5" width="15.3" height="2.0" fill="#4f86e8"></rect><rect x="142.0" y="67.6" width="1.5" height="2.0" fill="#cf8ff0"></rect><rect x="144.6" y="67.6" width="1.0" height="2.0" fill="#35b556"></rect><rect x="146.4" y="67.6" width="14.6" height="2.0" fill="#4f86e8"></rect><rect x="189.8" y="67.6" width="8.7" height="2.0" fill="#4f86e8"></rect><rect x="142.0" y="70.6" width="1.5" height="2.0" fill="#cf8ff0"></rect><rect x="144.4" y="70.6" width="1.2" height="2.0" fill="#35b556"></rect><rect x="147.0" y="70.6" width="8.7" height="2.0" fill="#4f86e8"></rect><rect x="192.4" y="70.6" width="9.6" height="2.0" fill="#4f86e8"></rect><rect x="138.2" y="73.6" width="5.8" height="2.0" fill="#35b556"></rect><rect x="145.0" y="73.6" width="12.4" height="2.0" fill="#4f86e8"></rect><rect x="176.3" y="73.6" width="1.7" height="2.0" fill="#cf8ff0"></rect><rect x="179.0" y="73.6" width="16.0" height="2.0" fill="#4f86e8"></rect><rect x="142.5" y="76.6" width="1.0" height="2.0" fill="#35b556"></rect><rect x="144.4" y="76.6" width="9.6" height="2.0" fill="#4f86e8"></rect><rect x="189.8" y="76.6" width="22.7" height="2.0" fill="#35b556"></rect><rect x="214.0" y="76.6" width="7.0" height="2.0" fill="#4f86e8"></rect><rect x="224.4" y="76.6" width="9.1" height="2.0" fill="#4f86e8"></rect><rect x="627.7" y="28.3" width="10.3" height="2.0" fill="#35b556"></rect><rect x="638.6" y="28.3" width="10.1" height="2.0" fill="#4f86e8"></rect><rect x="112.7" y="20" width="1.2" height="60" fill="#c9d9ff"></rect><rect x="122.9" y="20" width="1.2" height="60" fill="#f3c1c1"></rect><rect x="158.7" y="20" width="1.2" height="60" fill="#f3c1c1"></rect><rect x="180.8" y="20" width="1.2" height="60" fill="#c9d9ff"></rect><rect x="201.9" y="20" width="1.2" height="60" fill="#f3c1c1"></rect><rect x="221.9" y="20" width="1.2" height="60" fill="#f3c1c1"></rect><rect x="1.3" y="0" width="1.7" height="80" fill="#3f8fc4"></rect><rect x="1.3" y="0.5" width="4.2" height="18" rx="2" fill="#1d3f5e" stroke="#3f8fc4" stroke-width="1"></rect><rect x="2.9" y="5" width="1" height="8" fill="#cfe3ff"></rect></svg>
<div class="abs" style="left:327px;top:280px;width:359px;height:26px;background:#282828"></div>
<div class="t m" style="left:332px;top:285.5px">名称</div>
<div class="ln" style="left:327px;top:306px;width:360px;height:1px;background:#4a4a4a"></div>
<div class="abs" style="left:686.5px;top:280px;width:14px;height:457px;background:#2d2d2d"></div>
<div class="ln" style="left:686px;top:280px;width:1px;height:457px;background:#3a3a3a"></div>
<div class="abs" style="left:690px;top:474px;width:8.4px;height:82px;border-radius:4.2px;background:#6b6b6b"></div>
<div class="ln" style="left:700.5px;top:280px;width:1.2px;height:484px"></div>
<div class="abs" style="left:327px;top:307px;width:360px;height:430px;overflow:hidden">
<div class="row" style="left:1px;top:0px;background:#474747"><svg width="12" height="12" viewBox="0 0 13 13"><rect x=".9" y=".9" width="11.2" height="11.2" rx="2" fill="none" stroke="#e8946a" stroke-width="1.5"></rect><path d="M5.4 4.6L3.6 6.5L5.4 8.4M7.6 4.6L9.4 6.5L7.6 8.4" fill="none" stroke="#e8946a" stroke-width="1.3"></path></svg><span class="nm" style="font-size: 12.4px; letter-spacing: 0.273px;">core-optimi.m25b40.v2.28.5.min.js?v=2935906</span></div>
<div class="row" style="left:1px;top:21px;background:#202020"><svg width="12" height="12" viewBox="0 0 13 13"><rect x=".9" y=".9" width="11.2" height="11.2" rx="2" fill="none" stroke="#e8946a" stroke-width="1.5"></rect><path d="M5.4 4.6L3.6 6.5L5.4 8.4M7.6 4.6L9.4 6.5L7.6 8.4" fill="none" stroke="#e8946a" stroke-width="1.3"></path></svg><span class="nm" style="font-size: 12.4px; letter-spacing: 0.061px;">i.js</span></div>
<div class="row" style="left:1px;top:42px;background:#29292a"><svg width="12" height="12" viewBox="0 0 13 13"><rect x=".9" y=".9" width="11.2" height="11.2" rx="2" fill="none" stroke="#e8946a" stroke-width="1.5"></rect><path d="M5.4 4.6L3.6 6.5L5.4 8.4M7.6 4.6L9.4 6.5L7.6 8.4" fill="none" stroke="#e8946a" stroke-width="1.3"></path></svg><span class="nm" style="font-size: 12.4px; letter-spacing: 0.043px;">jsonp?cb=jsonp_cb_0_1761544080206_114&amp;callback=js…</span></div>
<div class="row" style="left:1px;top:63px;background:#202020"><svg width="13" height="12" viewBox="0 0 14 13"><path d="M4.4 1C2.6 1 2.8 2.4 2.8 3.8C2.8 5.4 1.8 6 .8 6.5C1.8 7 2.8 7.6 2.8 9.2C2.8 10.6 2.6 12 4.4 12M9.6 1C11.4 1 11.2 2.4 11.2 3.8C11.2 5.4 12.2 6 13.2 6.5C12.2 7 11.2 7.6 11.2 9.2C11.2 10.6 11.4 12 9.6 12" fill="none" stroke="#e8946a" stroke-width="1.5"></path><circle cx="7" cy="4.6" r="1" fill="#e8946a"></circle><circle cx="7" cy="8.4" r="1" fill="#e8946a"></circle></svg><span class="nm" style="font-size: 12.4px; letter-spacing: -0.016px;">getGrayLevel?kfuin=2852175932&amp;callback=JSONP_CB_…</span></div>
<div class="row" style="left:1px;top:84px;background:#29292a"><svg width="12" height="12" viewBox="0 0 13 13"><rect x=".9" y=".9" width="11.2" height="11.2" rx="2" fill="none" stroke="#e8946a" stroke-width="1.5"></rect><path d="M5.4 4.6L3.6 6.5L5.4 8.4M7.6 4.6L9.4 6.5L7.6 8.4" fill="none" stroke="#e8946a" stroke-width="1.3"></path></svg><span class="nm" style="font-size: 12.4px; letter-spacing: 0.117px;">jsonp?cb=jsonp_cb_0_1761544080206_204&amp;callback=j…</span></div>
<div class="row" style="left:1px;top:105px;background:#202020"><svg width="13" height="12" viewBox="0 0 14 13"><path d="M4.4 1C2.6 1 2.8 2.4 2.8 3.8C2.8 5.4 1.8 6 .8 6.5C1.8 7 2.8 7.6 2.8 9.2C2.8 10.6 2.6 12 4.4 12M9.6 1C11.4 1 11.2 2.4 11.2 3.8C11.2 5.4 12.2 6 13.2 6.5C12.2 7 11.2 7.6 11.2 9.2C11.2 10.6 11.4 12 9.6 12" fill="none" stroke="#e8946a" stroke-width="1.5"></path><circle cx="7" cy="4.6" r="1" fill="#e8946a"></circle><circle cx="7" cy="8.4" r="1" fill="#e8946a"></circle></svg><span class="nm" style="font-size: 12.4px; letter-spacing: 0.011px;">getGrayLevel?kfuin=2852175932&amp;callback=JSONP_CB_…</span></div>
<div class="row" style="left:1px;top:126px;background:#29292a"><svg width="12" height="12" viewBox="0 0 13 13"><rect x=".9" y=".9" width="11.2" height="11.2" rx="2" fill="none" stroke="#7cacf8" stroke-width="1.5"></rect><path d="M3.4 4H9.6M3.4 6.5H9.6M3.4 9H7.6" fill="none" stroke="#7cacf8" stroke-width="1"></path></svg><span class="nm" style="font-size: 12.4px; letter-spacing: 0.323px;">pc.html</span></div>
<div class="row" style="left:1px;top:147px;background:#202020"><svg width="12" height="12" viewBox="0 0 13 13"><rect x=".9" y=".9" width="11.2" height="11.2" rx="2" fill="none" stroke="#7cacf8" stroke-width="1.5"></rect><path d="M3.4 4H9.6M3.4 6.5H9.6M3.4 9H7.6" fill="none" stroke="#7cacf8" stroke-width="1"></path></svg><span class="nm" style="font-size: 12.4px; letter-spacing: 0.215px;">index.html?kfuin=2852175932</span></div>
<div class="row" style="left:1px;top:168px;background:#29292a"><svg width="12" height="12" viewBox="0 0 13 13"><rect x=".9" y=".9" width="11.2" height="11.2" rx="2" fill="none" stroke="#e8946a" stroke-width="1.5"></rect><path d="M5.4 4.6L3.6 6.5L5.4 8.4M7.6 4.6L9.4 6.5L7.6 8.4" fill="none" stroke="#e8946a" stroke-width="1.3"></path></svg><span class="nm" style="font-size: 12.4px; letter-spacing: 0.226px;">initQidianMonitor.js</span></div>
<div class="row" style="left:1px;top:189px;background:#202020"><svg width="12" height="12" viewBox="0 0 13 13"><rect x=".9" y=".9" width="11.2" height="11.2" rx="2" fill="none" stroke="#e8946a" stroke-width="1.5"></rect><path d="M5.4 4.6L3.6 6.5L5.4 8.4M7.6 4.6L9.4 6.5L7.6 8.4" fill="none" stroke="#e8946a" stroke-width="1.3"></path></svg><span class="nm" style="font-size: 12.4px; letter-spacing: 0.199px;">instant.js</span></div>
<div class="row" style="left:1px;top:210px;background:#29292a"><svg width="12" height="12" viewBox="0 0 13 13"><rect x=".9" y=".9" width="11.2" height="11.2" rx="2" fill="none" stroke="#e8946a" stroke-width="1.5"></rect><path d="M5.4 4.6L3.6 6.5L5.4 8.4M7.6 4.6L9.4 6.5L7.6 8.4" fill="none" stroke="#e8946a" stroke-width="1.3"></path></svg><span class="nm" style="font-size: 12.4px; letter-spacing: 0.061px;">i.js</span></div>
<div class="row" style="left:1px;top:231px;background:#202020"><svg width="12" height="12" viewBox="0 0 13 13"><rect x=".9" y=".9" width="11.2" height="11.2" rx="2" fill="none" stroke="#e8946a" stroke-width="1.5"></rect><path d="M5.4 4.6L3.6 6.5L5.4 8.4M7.6 4.6L9.4 6.5L7.6 8.4" fill="none" stroke="#e8946a" stroke-width="1.3"></path></svg><span class="nm" style="font-size: 12.4px; letter-spacing: 0.19px;">qidianMonitor.umd.min.js</span></div>
<div class="row" style="left:1px;top:252px;background:#29292a"><svg width="12" height="12" viewBox="0 0 13 13"><rect x=".9" y=".9" width="11.2" height="11.2" rx="2" fill="none" stroke="#e8946a" stroke-width="1.5"></rect><path d="M5.4 4.6L3.6 6.5L5.4 8.4M7.6 4.6L9.4 6.5L7.6 8.4" fill="none" stroke="#e8946a" stroke-width="1.3"></path></svg><span class="nm" style="font-size: 12.4px; letter-spacing: 0.084px;">feedback-2.0.1.js</span></div>
<div class="row" style="left:1px;top:273px;background:#202020"><svg width="12" height="12" viewBox="0 0 13 13"><rect x=".9" y=".9" width="11.2" height="11.2" rx="2" fill="none" stroke="#e8946a" stroke-width="1.5"></rect><path d="M5.4 4.6L3.6 6.5L5.4 8.4M7.6 4.6L9.4 6.5L7.6 8.4" fill="none" stroke="#e8946a" stroke-width="1.3"></path></svg><span class="nm" style="font-size: 12.4px; letter-spacing: 0.118px;">trtc_4.14.4.js</span></div>
<div class="row" style="left:1px;top:294px;background:#29292a"><svg width="12" height="12" viewBox="0 0 13 13"><rect x=".9" y=".9" width="11.2" height="11.2" rx="2" fill="none" stroke="#c58af9" stroke-width="1.5"></rect><path d="M4 9L9 4M4 9L4.4 7.4M4 9L5.6 8.6" fill="none" stroke="#c58af9" stroke-width="1.3"></path></svg><span class="nm" style="font-size: 12.4px; letter-spacing: 0.272px;">chunk-vendors.ce592f66.css</span></div>
<div class="row" style="left:1px;top:315px;background:#202020"><svg width="12" height="12" viewBox="0 0 13 13"><rect x=".9" y=".9" width="11.2" height="11.2" rx="2" fill="none" stroke="#c58af9" stroke-width="1.5"></rect><path d="M4 9L9 4M4 9L4.4 7.4M4 9L5.6 8.6" fill="none" stroke="#c58af9" stroke-width="1.3"></path></svg><span class="nm" style="font-size: 12.4px; letter-spacing: 0.32px;">pc.cd796065.css</span></div>
<div class="row" style="left:1px;top:336px;background:#29292a"><svg width="12" height="12" viewBox="0 0 13 13"><rect x=".9" y=".9" width="11.2" height="11.2" rx="2" fill="none" stroke="#e8946a" stroke-width="1.5"></rect><path d="M5.4 4.6L3.6 6.5L5.4 8.4M7.6 4.6L9.4 6.5L7.6 8.4" fill="none" stroke="#e8946a" stroke-width="1.3"></path></svg><span class="nm" style="font-size: 12.4px; letter-spacing: 0.26px;">chunk-imsdk.00e70c3b.js</span></div>
<div class="row" style="left:1px;top:357px;background:#202020"><svg width="12" height="12" viewBox="0 0 13 13"><rect x=".9" y=".9" width="11.2" height="11.2" rx="2" fill="none" stroke="#e8946a" stroke-width="1.5"></rect><path d="M5.4 4.6L3.6 6.5L5.4 8.4M7.6 4.6L9.4 6.5L7.6 8.4" fill="none" stroke="#e8946a" stroke-width="1.3"></path></svg><span class="nm" style="font-size: 12.4px; letter-spacing: 0.242px;">chunk-vendors.8550c180.js</span></div>
<div class="row" style="left:1px;top:378px;background:#29292a"><svg width="12" height="12" viewBox="0 0 13 13"><rect x=".9" y=".9" width="11.2" height="11.2" rx="2" fill="none" stroke="#e8946a" stroke-width="1.5"></rect><path d="M5.4 4.6L3.6 6.5L5.4 8.4M7.6 4.6L9.4 6.5L7.6 8.4" fill="none" stroke="#e8946a" stroke-width="1.3"></path></svg><span class="nm" style="font-size: 12.4px; letter-spacing: 0.41px;">pc.25b5594c.js</span></div>
<div class="row" style="left:1px;top:399px;background:#202020"><svg width="12" height="12" viewBox="0 0 13 13"><rect x=".9" y=".9" width="11.2" height="11.2" rx="2" fill="none" stroke="#e8946a" stroke-width="1.5"></rect><path d="M5.4 4.6L3.6 6.5L5.4 8.4M7.6 4.6L9.4 6.5L7.6 8.4" fill="none" stroke="#e8946a" stroke-width="1.3"></path></svg><span class="nm" style="font-size: 12.4px; letter-spacing: 0.19px;">qidianMonitor.umd.min.js</span></div>
<div class="row" style="left:1px;top:420px;background:#29292a"><svg width="12" height="12" viewBox="0 0 13 13"><rect x=".9" y=".9" width="11.2" height="11.2" rx="2" fill="none" stroke="#e8946a" stroke-width="1.5"></rect><path d="M5.4 4.6L3.6 6.5L5.4 8.4M7.6 4.6L9.4 6.5L7.6 8.4" fill="none" stroke="#e8946a" stroke-width="1.3"></path></svg><span class="nm" style="font-size: 12.4px; letter-spacing: 0.145px;">jquery-1.12.4-fixed.min.js</span></div>
</div>
<div class="ln" style="left:327px;top:737px;width:1960px;height:1px;background:#6a6a6a"></div>
<div class="ln" style="left:0;top:764px;width:2287px;height:1px"></div>
<div class="abs" style="left:0;top:765px;width:2287px;height:19px;background:#3c3c3c"></div>
<div class="abs" style="left:327px;top:738px;width:374px;height:26px;overflow:hidden">
<div class="t" style="left: 10px; top: 5.5px; color: rgb(208, 208, 208); letter-spacing: -0.067px;">113 个请求</div>
<div class="t" style="left: 87.4px; top: 5.5px; color: rgb(208, 208, 208); letter-spacing: 0.114px;">已传输 9.2 MB</div>
<div class="t" style="left: 185px; top: 5.5px; color: rgb(208, 208, 208); letter-spacing: 0.015px;">15.5 MB 项资源</div>
<div class="t" style="left:288.6px;top:5.5px;color:#d0d0d0">完成用时：14.46 秒</div>
<div class="ln" style="left:77.5px;top:5px;width:1px;height:16px"></div>
<div class="ln" style="left:175.4px;top:5px;width:1px;height:16px"></div>
<div class="ln" style="left:278.4px;top:5px;width:1px;height:16px"></div>
</div>
<div class="t" style="left:709.8px;top:742.4px;color:#7cacf8;font-size:14px;font-weight:bold;letter-spacing:5.4px">{}</div>
<div class="t" style="left: 737px; top: 743.5px; color: rgb(208, 208, 208); letter-spacing: 0.028px;">已选择 5 个字符</div>
<div class="t" style="left:-1.5px;top:770px;color:#c7c7c7;font-weight:bold">⋮</div>
<div class="t m" style="left:24.5px;top:771.4px;color:#a8c7fa">控制台</div>
<div class="abs" style="left:702px;top:280px;width:1585px;height:26px;background:#3c3c3c"></div>
<div class="ln" style="left:702px;top:306px;width:1585px;height:1px"></div>
<svg class="abs" style="left:716.5px;top:287.5px" width="11" height="11" viewBox="0 0 11 11"><path d="M.8 .8L10.2 10.2M10.2 .8L.8 10.2" stroke="#e3e3e3" stroke-width="1.4" fill="none"></path></svg>
<div class="t m" style="left:748px;top:285.5px;color:#e3e3e3">标头</div>
<div class="t m" style="left:792.4px;top:285.5px;color:#e3e3e3">载荷</div>
<div class="t m" style="left:836.1px;top:285.5px;color:#e3e3e3">预览</div>
<div class="t m" style="left:880.1px;top:285.5px;color:#a8c7fa">响应</div>
<div class="t m" style="left:924.4px;top:285.5px;color:#e3e3e3">启动器</div>
<div class="t m" style="left:980px;top:285.5px;color:#e3e3e3">时间</div>
<div class="abs" style="left:870px;top:304px;width:44px;height:3px;background:#a8c7fa;border-radius:3px 3px 0 0"></div>
<div class="code">
<div class="ig" style="left:61.6px;top:-4.0px;height:430.9px"></div>
<div class="ig" style="left:88.1px;top:-4.0px;height:430.9px"></div>
<div class="ig" style="left:114.6px;top:-4.0px;height:430.9px"></div>
<div class="ig" style="left:141.1px;top:-4.0px;height:430.9px"></div>
<div class="ig" style="left:167.6px;top:-4.0px;height:123.1px"></div>
<div class="ig" style="left:167.6px;top:149.9px;height:277.0px"></div>
<div class="ig" style="left:194.1px;top:211.5px;height:15.4px"></div>
<div class="ig" style="left:194.1px;top:319.2px;height:107.7px"></div>
<div class="ig" style="left:220.5px;top:334.6px;height:76.9px"></div>
<div class="dash" style="top:3px"></div>
<div class="cl" style="top:-4.00px">                    <span class="k">this</span>[a0_0x1e60(<span class="n">0x2be</span>)][a0_0x1e60(<span class="n">0x19d</span>)][<span class="s">'left'</span>] = _0x19a35d + <span class="s">'px'</span>;</div>
<div class="dash" style="top:19px"></div>
<div class="cl" style="top:11.39px">                    <span class="k">var</span> <span class="d">_0x33555e</span> = <span class="k">this</span>[a0_0x1e60(<span class="n">0x2be</span>)][<span class="s">'offsetWidth'</span>]</div>
<div class="dash" style="top:34px"></div>
<div class="cl" style="top:26.78px">                      , <span class="d">_0x6adb25</span> = <span class="k">this</span>[<span class="s">'$jigsaw'</span>][<span class="s">'offsetWidth'</span>]</div>
<div class="dash" style="top:50px"></div>
<div class="cl" style="top:42.17px">                      , <span class="d">_0x46efaa</span> = <span class="k">this</span>[a0_0x1e60(<span class="n">0x2cd</span>)](<span class="k">this</span>[<span class="s">'$jigsaw'</span>], _0x33555e - _0x6adb25);</div>
<div class="dash" style="top:65px"></div>
<div class="cl" style="top:57.56px">                    <span class="k">this</span>[a0_0x1e60(<span class="n">0x2c1</span>)] ? <span class="k">this</span>[<span class="s">'updateJigsawRotateAndLeft'</span>]() : <span class="k">this</span>[a0_0x1e60(<span class="n">0x2ca</span>)][a0_0x1e60(<span class="n">0x19d</span>)][a0_0x1e60(<span class="n">0x89</span>)] = _0x46efaa + <span class="s">'px'</span>,</div>
<div class="dash" style="top:80px"></div>
<div class="cl" style="top:72.95px">                    _0x4332c6[<span class="s">'addClass'</span>](<span class="k">this</span>[a0_0x1e60(<span class="n">0x2c6</span>)], a0_0x1e60(<span class="n">0x2d0</span>)),</div>
<div class="dash" style="top:96px"></div>
<div class="cl" style="top:88.34px">                    <span class="k">this</span>[a0_0x1e60(<span class="n">0x2bf</span>)][<span class="s">'style'</span>][<span class="s">'width'</span>] = _0x19a35d + _0x33555e + <span class="s">'px'</span>,</div>
<div class="dash" style="top:111px"></div>
<div class="cl" style="top:103.73px">                    <span class="k">this</span>[a0_0x1e60(<span class="n">0x2d1</span>)](<span class="k">this</span>[<span class="s">'controlBar'</span>][<span class="s">'slideIconMoving'</span>]);</div>
<div class="dash" style="top:127px"></div>
<div class="cl" style="top:119.12px">                },</div>
<div class="dash" style="top:142px"></div>
<div class="cl" style="top:134.51px">                <span class="s">'onMouseUp'</span>: <span class="k">function</span>(<span class="d">_0x990895</span>) {</div>
<div class="dash" style="top:157px"></div>
<div class="cl" style="top:149.90px">                    <span class="k">var</span> <span class="d">_0x23fea1</span> = <span class="k">this</span>[a0_0x1e60(<span class="n">0x1a6</span>)]</div>
<div class="dash" style="top:173px"></div>
<div class="cl" style="top:165.29px">                      , <span class="d">_0x5d6fc3</span> = {};</div>
<div class="dash" style="top:188px"></div>
<div class="cl" style="top:180.68px">                    _0x5d6fc3[<span class="s">'beginTime'</span>] = <span class="n">0x0</span>;</div>
<div class="dash" style="top:203px"></div>
<div class="cl" style="top:196.07px">                    <span class="k">if</span> (<span class="s">'dragend'</span> === _0x23fea1[a0_0x1e60(<span class="n">0x15e</span>)])</div>
<div class="dash" style="top:219px"></div>
<div class="cl" style="top:211.46px">                        <span class="k">return</span> <span class="k">void</span> Object[a0_0x1e60(<span class="n">0x74</span>)](_0x23fea1, _0x5d6fc3);</div>
<div class="dash" style="top:234px"></div>
<div class="cl" style="top:226.85px">                    Object[<span class="s">'assign'</span>](_0x23fea1, <span class="k">this</span>[<span class="s">'initialDrag'</span>]);</div>
<div class="dash" style="top:250px"></div>
<div class="cl" style="top:242.24px">                    <span class="k">var</span> <span class="d">_0x4a4a62</span> = _0x1b7568[a0_0x1e60(<span class="n">0x2d6</span>)](<span class="k">this</span>[a0_0x1e60(<span class="n">0x263</span>)], _0x27edd5)</div>
<div class="dash" style="top:265px"></div>
<div class="cl" style="top:257.63px">                      , <span class="d">_0x319bb4</span> = <span class="k">this</span>[<span class="s">'$store'</span>][a0_0x1e60(<span class="n">0x187</span>)][a0_0x1e60(<span class="n">0x1b1</span>)]</div>
<div class="dash" style="top:280px"></div>
<div class="cl" style="top:273.02px">                      , <span class="d">_0x15278a</span> = _0xa8a0c6(_0x564a9f(_0x319bb4, parseInt(<span class="k">this</span>[<span class="s">'$jigsaw'</span>][a0_0x1e60(<span class="n">0x19d</span>)][<span class="s">'left'</span>], <span class="n">0xa</span>) / <span class="k">this</span>[a0_0x1e60(<span class="n">0x154</span>)] * <span class="n">0x64</span> + <span class="s">''</span>))</div>
<div class="dash" style="top:296px"></div>
<div class="cl" style="top:288.41px">                      , <span class="d">_0x4d98f2</span> = _0x318cde(_0x1b7568[a0_0x1e60(<span class="n">0x2d7</span>)](<span class="k">this</span>[a0_0x1e60(<span class="n">0x2d5</span>)], <span class="n">0x2</span>));</div>
<div class="dash" style="top:311px"></div>
<div class="cl" style="top:303.80px">                    <span class="k">this</span>[<span class="s">'onVerifyCaptcha'</span>]({</div>
<div class="dash" style="top:327px"></div>
<div class="cl" style="top:319.19px">                        <span class="s">'data'</span>: JSON[a0_0x1e60(<span class="n">0x138</span>)]({</div>
<div class="dash" style="top:342px"></div>
<div class="cl" style="top:334.58px">                            <span class="s">'d'</span>: _0xa8a0c6(_0x4a4a62[<span class="s">'join'</span>](<span class="s">':'</span>)),</div>
<div class="dash" style="top:357px"></div>
<div class="cl" style="top:349.97px">                            <span class="s">'m'</span>: <span class="s">''</span>,</div>
<div class="dash" style="top:373px"></div>
<div class="cl" style="top:365.36px">                            <span class="s">'p'</span>: _0x15278a,</div>
<div class="dash" style="top:388px"></div>
<div class="cl" style="top:380.75px">                            <span class="s">'f'</span>: _0xa8a0c6(_0x564a9f(_0x319bb4, _0x4d98f2[<span class="s">'join'</span>](<span class="s">','</span>))),</div>
<div class="dash" style="top:404px"></div>
<div class="cl" style="top:396.14px">                            <span class="s" style="background:#3f3f3f;padding:2px 0">'ext'</span>: _0xa8a0c6(_0x564a9f(_0x319bb4, <span class="k">this</span>[<span class="s">'mouseDownCounts'</span>] + <span class="s">','</span> + <span class="k">this</span>[<span class="s">'traceData'</span>][<span class="s">'length'</span>]))</div>
<div class="dash" style="top:419px"></div>
<div class="cl" style="top:411.53px">                        }),</div>
</div>
<div class="ln" style="left:702px;top:722px;width:1585px;height:1px;background:#3a3a3a"></div>
<div class="abs" style="left:702px;top:723px;width:1585px;height:14px;background:#2b2b2b"></div>
<div class="abs" style="left:704px;top:726px;width:17px;height:8px;border-radius:4px;background:#6b6b6b"></div>
<div class="abs" style="left:1966px;top:728.2px;font-size:25px;word-spacing:1.2px;letter-spacing:.12px;line-height:34px;white-space:nowrap;color:rgba(255,255,255,.82);text-shadow:1px 1px 2px rgba(0,0,0,.6);font-family:'Noto Sans CJK SC','Liberation Sans',sans-serif">掘金技术社区 @ Glommer</div>
</body></html>
